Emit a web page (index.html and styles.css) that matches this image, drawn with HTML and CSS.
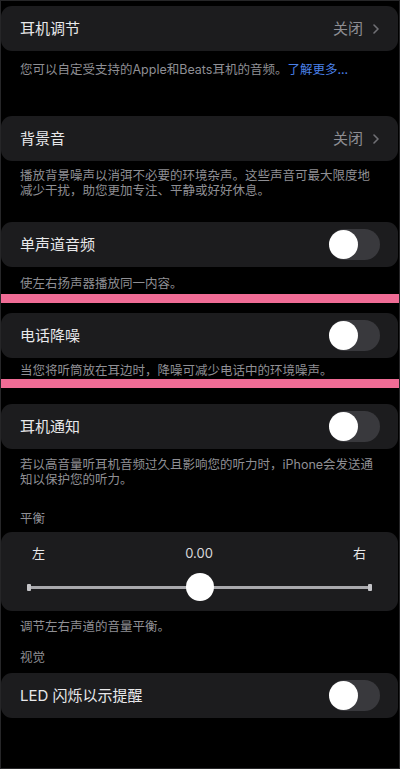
FILE: index.html
```html
<!DOCTYPE html>
<html lang="zh-CN">
<head>
<meta charset="utf-8">
<title>音频设置</title>
<link rel="stylesheet" href="styles.css">
</head>
<body>
<div class="screen">
  <section class="group g1">
    <div class="card">
      <span class="title">耳机调节</span>
      <span class="value">关闭<svg class="chev" width="6" height="10" viewBox="0 0 6 10"><path d="M1 1 L5 5 L1 9" fill="none" stroke="#707075" stroke-width="1.6" stroke-linecap="round" stroke-linejoin="round"/></svg></span>
    </div>
    <p class="note n1">您可以自定受支持的Apple和Beats耳机的音频。<span class="link">了解更多...</span></p>
  </section>

  <section class="group g2">
    <div class="card">
      <span class="title">背景音</span>
      <span class="value">关闭<svg class="chev" width="6" height="10" viewBox="0 0 6 10"><path d="M1 1 L5 5 L1 9" fill="none" stroke="#707075" stroke-width="1.6" stroke-linecap="round" stroke-linejoin="round"/></svg></span>
    </div>
    <p class="note n2">播放背景噪声以消弭不必要的环境杂声。这些声音可最大限度地<br>减少干扰，助您更加专注、平静或好好休息。</p>
  </section>

  <section class="group g3">
    <div class="card">
      <span class="title">单声道音频</span>
      <span class="toggle"><span class="knob"></span></span>
    </div>
    <p class="note n3">使左右扬声器播放同一内容。</p>
  </section>

  <section class="group g4">
    <div class="card">
      <span class="title">电话降噪</span>
      <span class="toggle"><span class="knob"></span></span>
    </div>
    <p class="note n4">当您将听筒放在耳边时，降噪可减少电话中的环境噪声。</p>
  </section>

  <section class="group g5">
    <div class="card">
      <span class="title">耳机通知</span>
      <span class="toggle"><span class="knob"></span></span>
    </div>
    <p class="note n5">若以高音量听耳机音频过久且影响您的听力时，iPhone会发送通<br>知以保护您的听力。</p>
  </section>

  <h3 class="header h-balance">平衡</h3>
  <section class="group g6">
    <div class="card slider-card">
      <div class="labels">
        <span>左</span>
        <span class="num">0.00</span>
        <span>右</span>
      </div>
      <div class="slider">
        <span class="cap cap-l"></span>
        <span class="track"></span>
        <span class="cap cap-r"></span>
        <span class="thumb"></span>
      </div>
    </div>
    <p class="note n6">调节左右声道的音量平衡。</p>
  </section>

  <h3 class="header h-visual">视觉</h3>
  <section class="group g7">
    <div class="card">
      <span class="title">LED 闪烁以示提醒</span>
      <span class="toggle"><span class="knob"></span></span>
    </div>
  </section>

  <div class="mark mark-1"></div>
  <div class="mark mark-2"></div>
</div>
</body>
</html>
```

FILE: styles.css
```css
html, body {
  margin: 0;
  padding: 0;
  background: #000;
}

.screen {
  position: relative;
  box-sizing: border-box;
  width: 400px;
  height: 769px;
  overflow: hidden;
  background: #000;
  border: 1px solid #262628;
  padding-top: 5px;
  font-family: "Inter", "Noto Sans CJK SC", sans-serif;
  color: #e6e6e8;
}

.group {
  margin: 0;
}

.card {
  box-sizing: border-box;
  height: 45px;
  margin: 0 1px 0 0;
  background: #1c1c1e;
  border-radius: 11px;
  display: flex;
  align-items: center;
  justify-content: space-between;
  padding: 0 18px 0 19px;
}

.title {
  font-size: 15px;
  line-height: 20px;
  color: #e8e8ea;
}

.value {
  display: flex;
  align-items: center;
  font-size: 15px;
  line-height: 20px;
  color: #8e8e93;
}

.chev {
  margin-left: 10px;
  margin-right: 1px;
}

.toggle {
  position: relative;
  width: 51px;
  height: 31px;
  border-radius: 16px;
  background: #39393d;
  margin-right: 0;
}

.knob {
  position: absolute;
  left: 0;
  top: 1px;
  width: 29px;
  height: 29px;
  border-radius: 50%;
  background: #fff;
}

.note {
  margin: 0;
  padding: 0 19px;
  font-size: 12.5px;
  line-height: 15px;
  color: #8f8f94;
  white-space: nowrap;
}

.link {
  color: #4b82ea;
}

.n1 { padding-top: 11px; }
.g2 { margin-top: 39px; }
.n2 { padding-top: 7px; }
.g3 { margin-top: 24px; }
.n3 { padding-top: 9px; }
.g4 { margin-top: 22px; }
.n4 { padding-top: 5px; }
.g5 { margin-top: 26px; }
.n5 { padding-top: 8px; }

.header {
  margin: 0;
  padding: 0 19px;
  font-size: 12.5px;
  line-height: 15px;
  font-weight: normal;
  color: #8f8f94;
}

.h-balance { margin-top: 24px; }
.g6 { margin-top: 6px; }
.n6 { padding-top: 8px; }
.h-visual { margin-top: 16px; }
.g7 { margin-top: 8px; }

.slider-card {
  height: 79px;
  flex-direction: column;
  align-items: stretch;
  justify-content: flex-start;
  padding: 13px 0 0;
}

.labels {
  display: flex;
  justify-content: space-between;
  padding: 0 32px 0 31px;
  font-size: 13px;
  line-height: 16px;
  color: #e8e8ea;
}

.num {
  font-size: 13px;
  color: #d8d8da;
}

.slider {
  position: relative;
  margin: 12px 26px 0 26px;
  height: 28px;
  display: flex;
  align-items: center;
}

.track {
  flex: 1;
  height: 3px;
  background: #a9a9ad;
}

.cap {
  width: 4px;
  height: 7px;
  border-radius: 1px;
  background: #c4c4c8;
}

.thumb {
  position: absolute;
  left: 50%;
  top: 0;
  width: 28px;
  height: 28px;
  margin-left: -14px;
  border-radius: 50%;
  background: #fff;
}

.mark {
  position: absolute;
  left: 0;
  width: 400px;
  height: 9px;
  background: #ef6c95;
}

.mark-1 { top: 293px; }
.mark-2 { top: 378px; }
```
